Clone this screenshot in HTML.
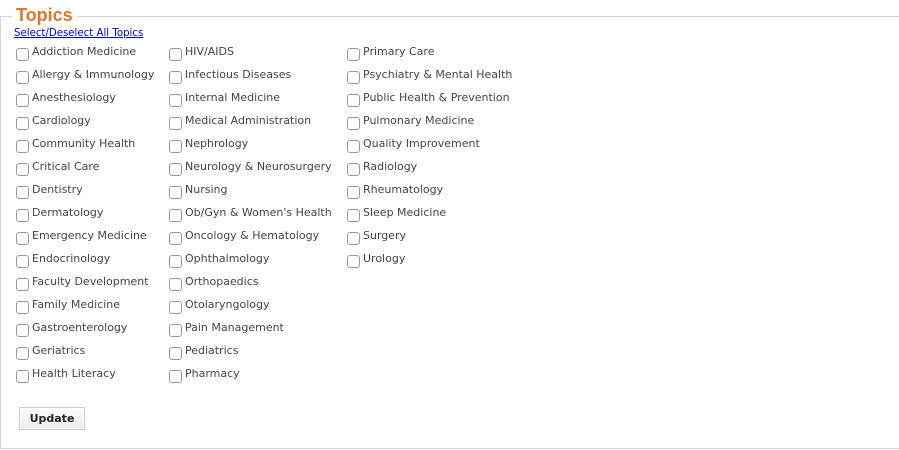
<!DOCTYPE html>
<html><head><style>
body{margin:0;width:899px;height:450px;background:#fff;font-family:"DejaVu Sans",Verdana,sans-serif;position:relative;overflow:hidden}
.fs{position:absolute;left:0;top:16px;width:905px;height:431px;border:1px solid #d4d4d4;border-right:none}
.lg{position:absolute;left:12px;top:5px;background:#fff;padding:0 4px;color:#d9782a;font:bold 18px "Liberation Sans",Arial,sans-serif}
.sel{position:absolute;left:14px;top:28px;font-size:10.2px;color:#0000cc;text-decoration:underline}
.i{position:absolute;font-size:11px;color:#444;white-space:nowrap}
.i b{position:absolute;left:-16px;top:3px;width:11px;height:11px;border:1px solid #999;border-radius:3px;background:#fff;font-weight:normal}
.btn{position:absolute;left:19px;top:407px;width:64px;height:21px;border:1px solid #ccc;background:linear-gradient(#fdfdfd,#ececec);box-shadow:inset 0 0 0 1px #fff;font:bold 11px "DejaVu Sans",Verdana,sans-serif;color:#222;text-align:center;line-height:21px}
</style></head><body>
<div class="fs"></div>
<div class="lg">Topics</div>
<div class="sel">Select/Deselect All Topics</div>
<div id="c"></div>
<div class="btn">Update</div>
<script>
var cols=[[32,["Addiction Medicine","Allergy &amp; Immunology","Anesthesiology","Cardiology","Community Health","Critical Care","Dentistry","Dermatology","Emergency Medicine","Endocrinology","Faculty Development","Family Medicine","Gastroenterology","Geriatrics","Health Literacy"]],
[185,["HIV/AIDS","Infectious Diseases","Internal Medicine","Medical Administration","Nephrology","Neurology &amp; Neurosurgery","Nursing","Ob/Gyn &amp; Women's Health","Oncology &amp; Hematology","Ophthalmology","Orthopaedics","Otolaryngology","Pain Management","Pediatrics","Pharmacy"]],
[363,["Primary Care","Psychiatry &amp; Mental Health","Public Health &amp; Prevention","Pulmonary Medicine","Quality Improvement","Radiology","Rheumatology","Sleep Medicine","Surgery","Urology"]]];
var h="";cols.forEach(function(c){c[1].forEach(function(t,i){h+='<div class="i" style="left:'+c[0]+'px;top:'+(45+i*23)+'px"><b></b>'+t+'</div>';});});
document.getElementById("c").innerHTML=h;
</script>
</body></html>
